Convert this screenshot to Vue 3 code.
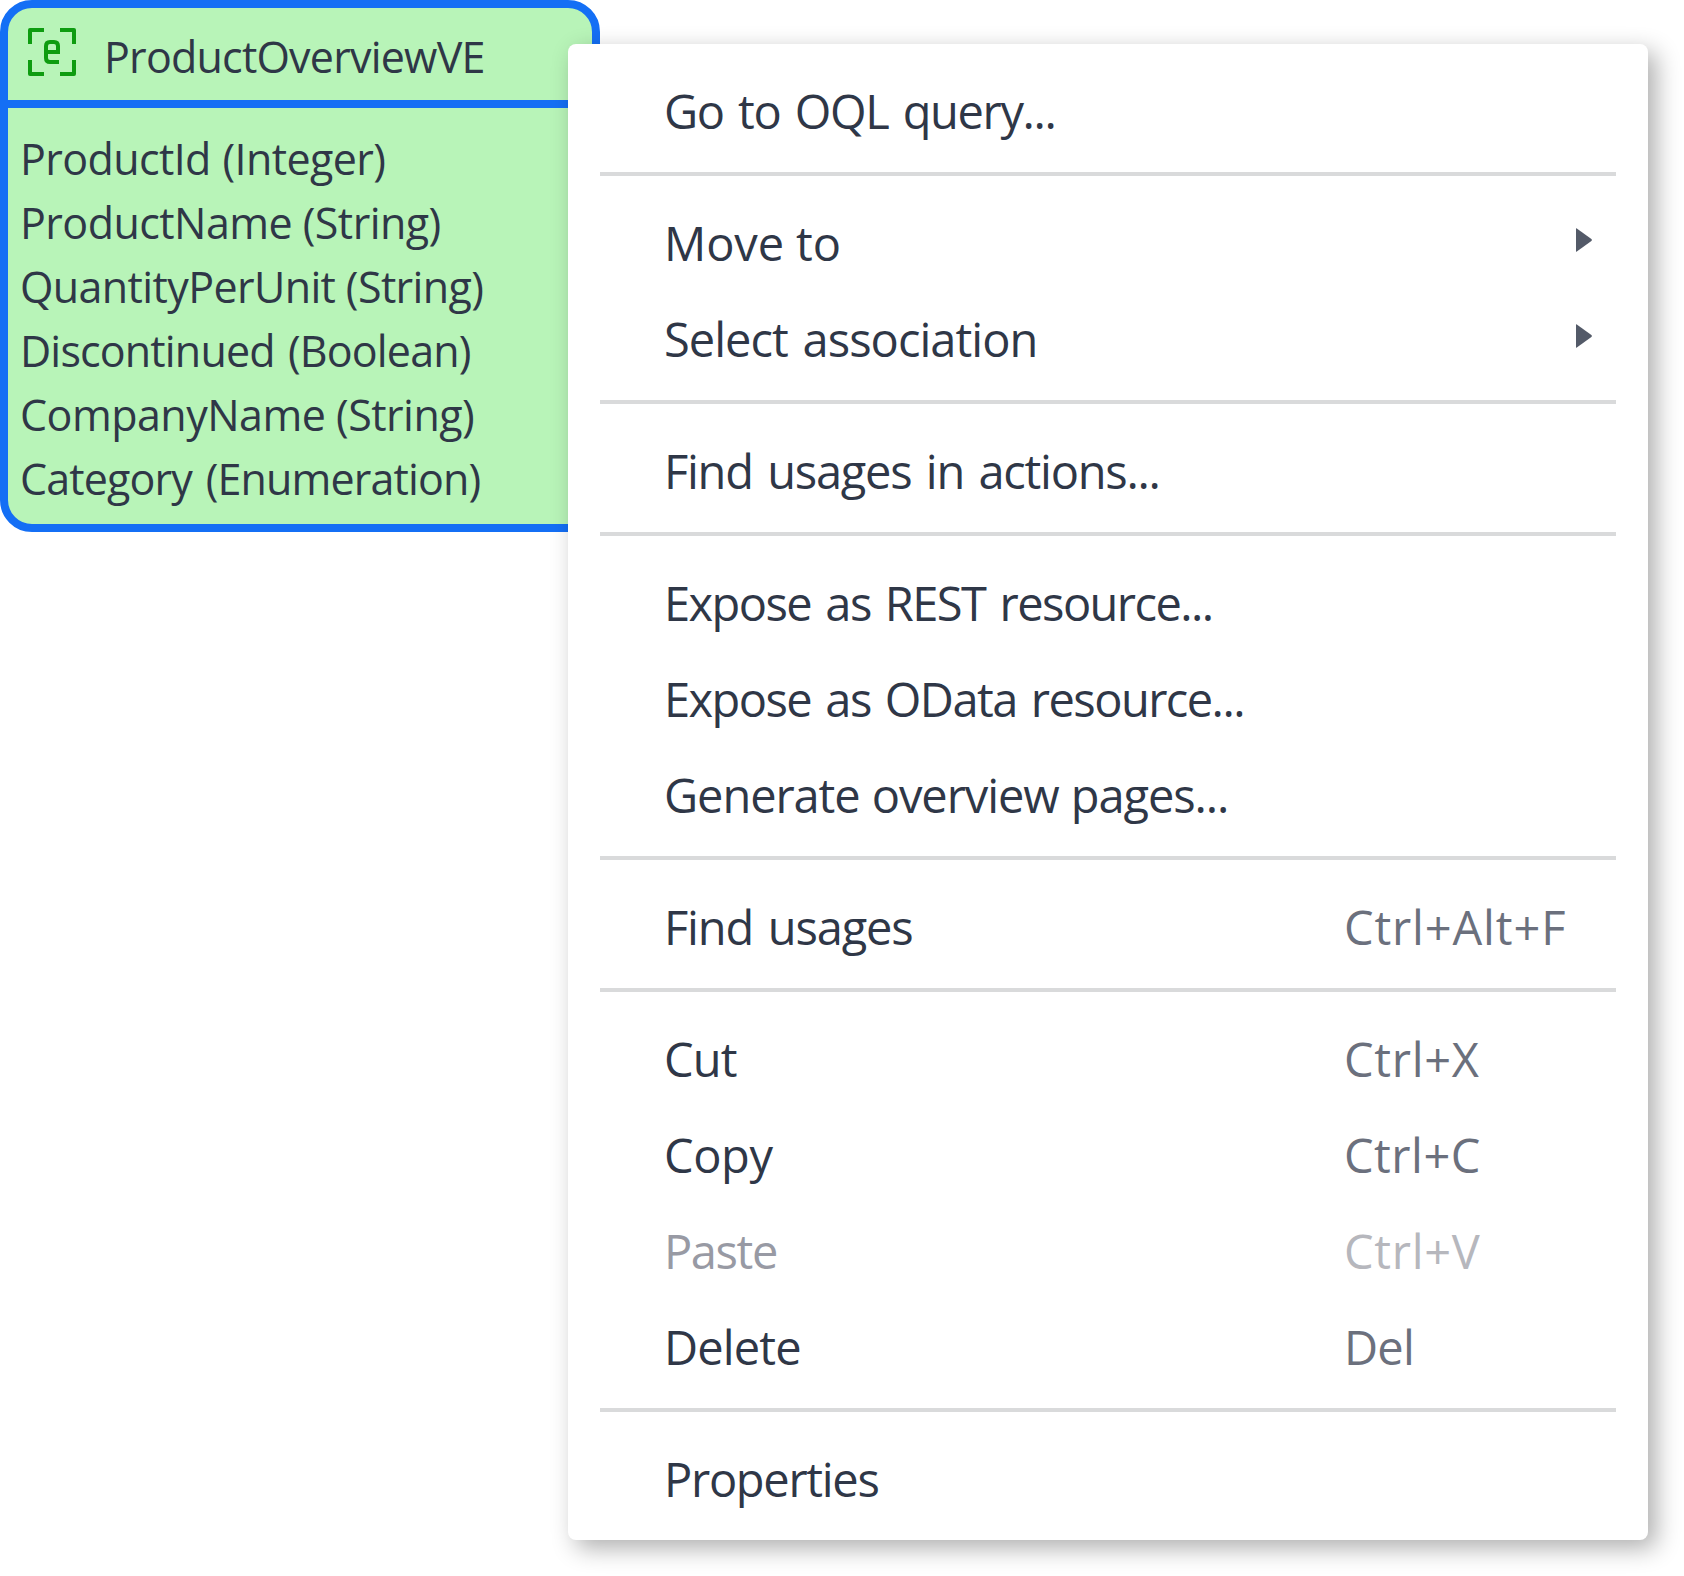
<script setup>
// `track` is the letter spacing and `gap` the extra word spacing of a string, in px
const title = { text: 'ProductOverviewVE', track: -0.78 }

const attributes = [
  { text: 'ProductId (Integer)', track: -0.6, gap: 1 },
  { text: 'ProductName (String)', track: -0.55 },
  { text: 'QuantityPerUnit (String)', track: -0.62 },
  { text: 'Discontinued (Boolean)', track: -0.84, gap: 3 },
  { text: 'CompanyName (String)', track: -0.52 },
  { text: 'Category (Enumeration)', track: -0.86, gap: 3.5 },
]

const groups = [
  [{ text: 'Go to OQL query...', track: -1.36, gap: 3.5 }],
  [
    { text: 'Move to', track: -0.1, submenu: true },
    { text: 'Select association', track: -0.97, gap: 3.5, submenu: true },
  ],
  [{ text: 'Find usages in actions...', track: -1.25, gap: 3.5 }],
  [
    { text: 'Expose as REST resource...', track: -1.56, gap: 3.5 },
    { text: 'Expose as OData resource...', track: -1.56, gap: 3.5 },
    { text: 'Generate overview pages...', track: -1.08, gap: 1 },
  ],
  [{ text: 'Find usages', track: -1.14, gap: 3.5, keys: 'Ctrl+Alt+F', keysTrack: 0.85 }],
  [
    { text: 'Cut', track: -0.8, keys: 'Ctrl+X', keysTrack: 0.7 },
    { text: 'Copy', track: -0.4, keys: 'Ctrl+C', keysTrack: 0.5 },
    { text: 'Paste', track: -1.4, keys: 'Ctrl+V', keysTrack: 0.7, disabled: true },
    { text: 'Delete', track: -0.85, keys: 'Del', keysTrack: -0.8 },
  ],
  [{ text: 'Properties', track: -1.3 }],
]

const spacing = (track, gap = 0) => ({ letterSpacing: track + 'px', wordSpacing: gap + 'px' })
</script>

<template>
  <main class="canvas">
    <section class="entity">
      <header class="entity-head">
        <svg class="entity-icon" width="48" height="48" viewBox="0 0 48 48" fill="none" stroke="currentColor" stroke-width="4">
          <path stroke-linejoin="round" d="M16 2H2V16M32 2H46V16M2 32V46H16M46 32V46H32" />
          <path d="M18 24H30V18Q30 14 26 14H22Q18 14 18 18V30Q18 34 22 34H31" />
        </svg>
        <h1 class="entity-title" :style="spacing(title.track)">{{ title.text }}</h1>
      </header>
      <ul class="attributes">
        <li v-for="a in attributes" :key="a.text" :style="spacing(a.track, a.gap)">{{ a.text }}</li>
      </ul>
    </section>

    <nav class="menu">
      <ul v-for="(group, i) in groups" :key="i" class="group">
        <li v-for="item in group" :key="item.text" class="item" :class="{ disabled: item.disabled }">
          <span class="label" :style="spacing(item.track, item.gap)">{{ item.text }}</span>
          <span v-if="item.keys" class="keys" :style="spacing(item.keysTrack)">{{ item.keys }}</span>
          <svg v-if="item.submenu" class="arrow" width="16" height="24" viewBox="0 0 16 24">
            <path d="M0 0.6Q0 0 .8 .4L15.4 11Q16.4 12 15.4 13L.8 23.6Q0 24 0 23.4Z" fill="currentColor" />
          </svg>
        </li>
      </ul>
    </nav>
  </main>
</template>

<style>
body {
  margin: 0;
  background: #fff;
}
</style>

<style scoped>
.canvas {
  position: relative;
  width: 1684px;
  height: 1576px;
  overflow: hidden;
  background: #fff;
  color: #2f3747;
  font-family: "Open Sans", "Noto Sans", sans-serif;
}
ul {
  margin: 0;
  padding: 0;
  list-style: none;
}
.entity {
  box-sizing: border-box;
  width: 600px;
  height: 532px;
  border: 8px solid #146ff5;
  border-radius: 32px;
  background: #b8f4b8;
  font-size: 43px;
}
.entity-head {
  box-sizing: border-box;
  display: flex;
  align-items: flex-start;
  height: 100px;
  padding: 20px 20px 0;
  border-bottom: 8px solid #146ff5;
}
.entity-icon {
  flex: none;
  color: #0e9c10;
}
.entity-title {
  margin: -3px 0 0 28px;
  font-size: 43px;
  font-weight: 400;
  line-height: 64px;
  white-space: nowrap;
}
.attributes {
  padding: 19px 0 0 12px;
}
.attributes li {
  height: 64px;
  line-height: 64px;
  white-space: nowrap;
}
.menu {
  position: absolute;
  left: 568px;
  top: 44px;
  box-sizing: border-box;
  width: 1080px;
  height: 1496px;
  padding: 16px 32px;
  border-radius: 8px;
  background: #fff;
  box-shadow: 8px 8px 24px rgba(0, 0, 0, 0.32);
  font-size: 47px;
}
.group + .group {
  margin-top: 16px;
  padding-top: 16px;
  border-top: 4px solid #d9dadb;
}
.item {
  display: grid;
  grid-template-columns: 680px 1fr auto;
  grid-template-rows: 96px;
  align-items: center;
  height: 96px;
  padding: 0 24px 0 64px;
  line-height: 89px;
  white-space: nowrap;
}
.label,
.keys {
  padding-top: 7px;
}
.keys {
  color: #6b707d;
}
.arrow {
  grid-column: 3;
  color: #535a68;
}
.disabled .label {
  color: #989aa4;
}
.disabled .keys {
  color: #b6b7bd;
}
</style>
